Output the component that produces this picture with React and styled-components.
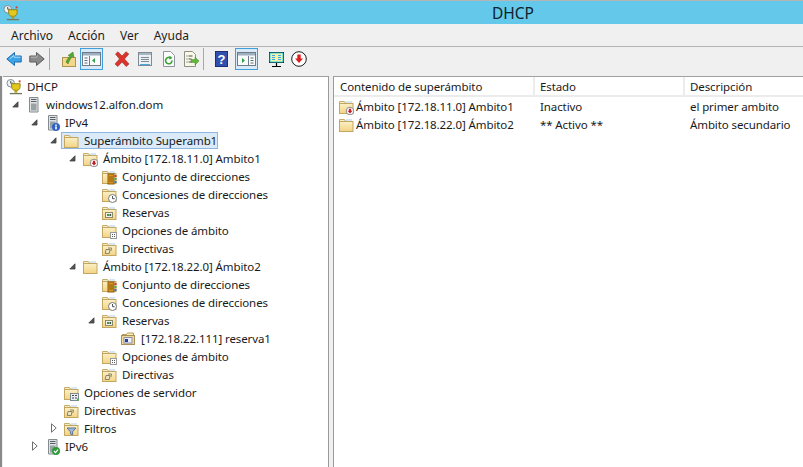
import React from 'react';
import styled, { createGlobalStyle } from 'styled-components';

const Global = createGlobalStyle`
  html, body { margin: 0; padding: 0; background: #f0f0f0; }
  #root { width: 803px; height: 467px; overflow: hidden; }
  * { box-sizing: border-box; }
  svg { flex: none; display: block; }
`;

const Window = styled.div`
  width: 803px; height: 467px; display: flex; flex-direction: column;
  font-family: "Noto Sans", "Open Sans", sans-serif; font-size: 11.5px; letter-spacing: -0.1px; color: #1a1a1a; background: #f0f0f0;
`;
const TitleBar = styled.div`
  height: 24px; flex: none; background: #63c8ea; border-top: 1px solid #b5b5b5;
  display: flex; align-items: center; padding-left: 3px;
`;
const TitleText = styled.div`
  flex: 1; text-align: center; font-size: 15.5px; letter-spacing: 0; color: #10222c; padding-left: 204px;
`;
const MenuBar = styled.div`
  height: 23px; flex: none; display: flex; align-items: center; gap: 15px; padding-left: 11px;
  border-bottom: 1px solid #b4b4b4;
`;
const MenuItem = styled.span`color: #1c1c1c; font-size: 12px; letter-spacing: 0;`;
const ToolBar = styled.div`
  height: 29px; flex: none; display: flex; align-items: center; padding: 0 0 5px 6px;
`;
const ToolIcon = styled.div`
  flex: none; width: ${p => p.$w || 16}px; height: 16px; margin-left: ${p => p.$ml || 0}px; display: flex;
`;
const ToggleButton = styled.div`
  flex: none; width: 23px; height: 22px; margin-left: ${p => p.$ml || 0}px; border: 1px solid #3f9fdc; background: #d8eaf8;
  display: flex; align-items: center; justify-content: center;
`;
const ToolSep = styled.div`
  flex: none; width: 1px; height: 22px; background: #a8a8a8; margin-left: ${p => p.$ml}px;
`;
const Panes = styled.div`
  flex: 1; display: flex; min-height: 0; padding-left: 1px; border-left: 2px solid #8a8a8a;
`;
const TreePane = styled.div`
  width: 326px; flex: none; background: #fff; border-top: 1px solid #a0a0a0; border-right: 1px solid #9a9a9a;
`;
const ListPane = styled.div`
  flex: 1; margin-left: 4px; background: #fff; border-top: 1px solid #a0a0a0; border-left: 1px solid #9a9a9a;
`;
const TreeRow = styled.div`
  height: 18px; display: flex; align-items: center; padding-left: ${p => p.$level === 0 ? 2 : 2 + (p.$level - 1) * 19}px;
`;
const ArrowCell = styled.div`
  width: 19px; flex: none; height: 18px; display: flex; align-items: center; padding-left: ${p => p.$closed ? 8 : 7}px;
`;
const Label = styled.div`
  display: flex; align-items: center; gap: 5px; height: 17px; white-space: nowrap; flex: none; margin-top: 1px;
  border: 1px solid ${p => p.$selected ? '#8fb6dc' : 'transparent'};
  background: ${p => p.$selected ? '#dbeaf9' : 'transparent'};
  margin-left: ${p => p.$selected ? '-1px' : '0'};
  padding-left: ${p => p.$selected ? '1px' : '0'};
  width: ${p => p.$selected ? '157px' : 'auto'};
`;
const HeaderRow = styled.div`
  display: grid; grid-template-columns: 201px 150px 1fr; height: 20px; border-bottom: 2px solid #ececec;
`;
const HeaderCell = styled.div`
  padding-left: ${p => p.$first ? 6 : 5}px; padding-top: 1px; border-right: ${p => p.$last ? 0 : '2px solid #ececec'}; line-height: 18px;
  white-space: nowrap; overflow: hidden;
`;
const ListRow = styled.div`
  display: grid; grid-template-columns: 201px 150px 1fr; height: 18px; align-items: center; padding-top: 1px;
`;
const ListCell = styled.div`
  padding-left: ${p => p.$icon ? 4 : 5}px; display: flex; align-items: center; gap: 2px; white-space: nowrap;
`;

const Ico = ({ children, w = 16, h = 16 }) => (
  <svg width={w} height={h} viewBox={`0 0 ${w} ${h}`}>{children}</svg>
);

const FolderBase = () => (
  <>
    <defs>
      <linearGradient id="fld" x1="0" y1="0" x2="0" y2="1">
        <stop offset="0" stopColor="#fbf0c6" />
        <stop offset="1" stopColor="#f3d382" />
      </linearGradient>
    </defs>
    <path d="M1.500 13.500V2.500h5l1 1.500h6.500" fill="#f8edc4" stroke="#c6ad6c" />
    <rect x="8" y="2" width="6" height="2" fill="#d5e6f4" />
    <rect x="1.500" y="4.500" width="13.500" height="10" fill="url(#fld)" stroke="#c3a662" />
  </>
);
const Folder = ({ children }) => <Ico><FolderBase />{children}</Ico>;

const Arrow = ({ open }) => (
  open
    ? <svg width="7" height="7" viewBox="0 0 7 7"><path d="M6 .8V6H.8z" fill="#555" stroke="#3c3c3c" strokeWidth=".8" /></svg>
    : <svg width="6" height="10" viewBox="0 0 6 10"><path d="M.5 .8L5.200 5 .5 9.200z" fill="#fff" stroke="#6f6f6f" /></svg>
);

const Server = ({ badge }) => (
  <Ico>
    <path d="M4.500 .5h8.500v14.500H4.500z" fill="#dfe2e4" stroke="#858c90" />
    <path d="M6 2.500h5.500M6 4.500h5.500" stroke="#566066" />
    <rect x="6" y="6.500" width="5.500" height="7" fill="#9aa2a6" />
    {badge === 'blue' && <><circle cx="12" cy="12" r="4" fill="#2f62c8" /><rect x="11.200" y="9.500" width="1.600" height="1.400" fill="#fff" /><rect x="11.200" y="11.400" width="1.600" height="3" fill="#fff" /></>}
    {badge === 'green' && <><circle cx="12" cy="12" r="4" fill="#2f9b3a" /><path d="M10 12l1.500 1.600L14 10.600" stroke="#fff" fill="none" strokeWidth="1.200" /></>}
  </Ico>
);

const Trophy = () => (
  <svg width="16" height="16" viewBox="0 0 17 17">
    <circle cx="5" cy="4.500" r="4" fill="#eef2f4" stroke="#7d8a90" />
    <path d="M5 2v2.500h2.400" stroke="#3d4c55" fill="none" />
    <path d="M6 5h9v3c0 3-2 4-3.500 4h-2C8 12 6 11 6 8z" fill="#e3c81d" stroke="#8f8010" />
    <rect x="9" y="12" width="3" height="2.500" fill="#b39f14" />
    <path d="M4 15.500h13" stroke="#6d7a60" strokeWidth="1.400" />
    <rect x="13.500" y="1.500" width="2" height="2" fill="#d83a2e" />
  </svg>
);
const StopBadge = () => (
  <><circle cx="12" cy="12" r="3.800" fill="#fff" stroke="#8b8b8b" /><path d="M10.900 9.800h2.200v2h1.500L12 14.600l-2.600-2.800h1.500z" fill="#c6202a" /></>
);
const PoolBadge = () => (
  <><rect x="7" y="5" width="6" height="10" fill="#d8951f" stroke="#8a5e11" /><path d="M8 8h4M8 10h4M8 12h4" stroke="#8a5e11" /><rect x="13.500" y="6" width="2" height="2" fill="#d6352c" /><rect x="13.500" y="9" width="2" height="2" fill="#3bb34a" /><rect x="13.500" y="12" width="2" height="2" fill="#2d72c7" /></>
);
const ClockBadge = () => (
  <><circle cx="11.500" cy="11.500" r="4" fill="#fff" stroke="#737b80" /><path d="M11.500 9v2.700h2.200" stroke="#4b5358" fill="none" /></>
);
const ReserveBadge = () => (
  <><rect x="4.500" y="7.500" width="7" height="5" fill="#f2f2f2" stroke="#8b8b6a" /><rect x="6" y="9" width="2" height="2" fill="#3a9a44" /><rect x="8.500" y="9" width="1.600" height="2" fill="#4a4a4a" /></>
);
const OptionBadge = () => (
  <><rect x="9.500" y="9.500" width="6" height="6" fill="#fff" stroke="#9a9a9a" /><path d="M11 11.500h1M13 11.500h1M11 13.500h1M13 13.500h1" stroke="#555" /></>
);
const PolicyBadge = () => (
  <><path d="M5 8.500h4l-.8 4H4.200z" fill="#efe6c4" stroke="#8b8563" /><path d="M7 7h3.500l-.6 3" fill="none" stroke="#8b8563" /></>
);
const ServerOptBadge = () => (
  <><rect x="7.500" y="8.500" width="8" height="7" fill="#e9eef0" stroke="#7c8a90" /><path d="M9 10.500h2M12 10.500h2M9 13h2M12 13h2" stroke="#445" /><rect x="14" y="13.500" width="2" height="2" fill="#45b04f" /></>
);
const FilterBadge = () => (
  <path d="M4 7h9l-3.400 3.800V14l-2.200-1v-2.200z" fill="#9fb6d6" stroke="#5e7698" />
);
const ReservaIco = () => (
  <Ico>
    <path d="M2 3.500h4.500l1-1.500h6v3" fill="#f9eebb" stroke="#b89c58" />
    <rect x="1.500" y="4.500" width="13" height="9" fill="#f0d79a" stroke="#a89058" />
    <rect x="4" y="6.500" width="8" height="5.500" fill="#eef1fb" stroke="#8a8fb0" />
    <rect x="5" y="8" width="3" height="3" fill="#2c3f9c" />
  </Ico>
);

const badges = {
  stop: <StopBadge />, pool: <PoolBadge />, clock: <ClockBadge />, res: <ReserveBadge />,
  opt: <OptionBadge />, pol: <PolicyBadge />, sopt: <ServerOptBadge />, filter: <FilterBadge />,
};

const treeData = [
  { level: 0, text: 'DHCP', icon: <Trophy /> },
  { level: 1, text: 'windows12.alfon.dom', arrow: 'open', icon: <Server /> },
  { level: 2, text: 'IPv4', arrow: 'open', icon: <Server badge="blue" /> },
  { level: 3, text: 'Superámbito Superamb1', arrow: 'open', icon: <Folder />, selected: true },
  { level: 4, text: 'Ámbito [172.18.11.0] Ambito1', arrow: 'open', icon: <Folder>{badges.stop}</Folder> },
  { level: 5, text: 'Conjunto de direcciones', icon: <Folder>{badges.pool}</Folder> },
  { level: 5, text: 'Concesiones de direcciones', icon: <Folder>{badges.clock}</Folder> },
  { level: 5, text: 'Reservas', icon: <Folder>{badges.res}</Folder> },
  { level: 5, text: 'Opciones de ámbito', icon: <Folder>{badges.opt}</Folder> },
  { level: 5, text: 'Directivas', icon: <Folder>{badges.pol}</Folder> },
  { level: 4, text: 'Ámbito [172.18.22.0] Ámbito2', arrow: 'open', icon: <Folder /> },
  { level: 5, text: 'Conjunto de direcciones', icon: <Folder>{badges.pool}</Folder> },
  { level: 5, text: 'Concesiones de direcciones', icon: <Folder>{badges.clock}</Folder> },
  { level: 5, text: 'Reservas', arrow: 'open', icon: <Folder>{badges.res}</Folder> },
  { level: 6, text: '[172.18.22.111] reserva1', icon: <ReservaIco /> },
  { level: 5, text: 'Opciones de ámbito', icon: <Folder>{badges.opt}</Folder> },
  { level: 5, text: 'Directivas', icon: <Folder>{badges.pol}</Folder> },
  { level: 3, text: 'Opciones de servidor', icon: <Folder>{badges.sopt}</Folder> },
  { level: 3, text: 'Directivas', icon: <Folder>{badges.pol}</Folder> },
  { level: 3, text: 'Filtros', arrow: 'closed', icon: <Folder>{badges.filter}</Folder> },
  { level: 2, text: 'IPv6', arrow: 'closed', icon: <Server badge="green" /> },
];

const listData = [
  { name: 'Ámbito [172.18.11.0] Ambito1', state: 'Inactivo', desc: 'el primer ambito', badge: badges.stop },
  { name: 'Ámbito [172.18.22.0] Ámbito2', state: '** Activo **', desc: 'Ámbito secundario' },
];

const BackArrow = () => (
  <Ico><path d="M.8 8L8.500 1.500v3.500H15.200v6H8.500v3.500z" fill="#3ea3e6" stroke="#1d6fae" /><path d="M3.500 8L8 4.300V6.200H14.500" fill="none" stroke="#a8dcfb" /></Ico>
);
const ForwardArrow = () => (
  <Ico><path d="M15.200 8L7.500 1.500v3.500H.8v6h6.700v3.500z" fill="#8a8a8a" stroke="#5c5c5c" /><path d="M1.500 6.200H8V4.300" fill="none" stroke="#b5b5b5" /></Ico>
);
const UpFolder = () => (
  <Ico><rect x="1.500" y="6.500" width="13" height="9" fill="#f3d78a" stroke="#ae9350" /><path d="M5 11c1-3 3-5 4-6l-2-.5 5-3.500 1 5.500-1.800-1C10 7 8 10 7 13z" fill="#53a832" stroke="#3a7c22" strokeWidth=".5" /></Ico>
);
const PaneLeft = () => (
  <svg width="19" height="16" viewBox="0 0 19 16">
    <rect x=".5" y="1.500" width="18" height="13" fill="#f8fafb" stroke="#6f7b85" />
    <rect x="1" y="2" width="17" height="2.500" fill="#9eb0bf" />
    <path d="M2.500 7h3M2.500 9.500h3M2.500 12h3" stroke="#5e6c78" />
    <path d="M7.500 5v9" stroke="#6f7b85" />
    <path d="M13 7v5l-3-2.500z" fill="#2fa24a" />
  </svg>
);
const PaneRight = () => (
  <svg width="19" height="16" viewBox="0 0 19 16">
    <rect x=".5" y="1.500" width="18" height="13" fill="#f8fafb" stroke="#6f7b85" />
    <rect x="1" y="2" width="17" height="2.500" fill="#9eb0bf" />
    <path d="M13.500 7h3M13.500 9.500h3M13.500 12h3" stroke="#5e6c78" />
    <path d="M11.500 5v9" stroke="#6f7b85" />
    <path d="M5 7v5l3-2.500z" fill="#2fa24a" />
  </svg>
);
const RedX = () => (
  <Ico><path d="M1.500 3L4 .8 8 5l4-4.200 2.800 2.200L10.500 8l4.500 5-2.800 2.500L8 11l-4.200 4.500L1 13l4.500-5z" fill="#d9352c" stroke="#a32a24" strokeWidth=".6" /></Ico>
);
const Props = () => (
  <Ico><rect x="1.500" y="1.500" width="13" height="13" fill="#eef1f3" stroke="#7f8a92" /><rect x="2" y="2" width="12" height="2" fill="#a9b7c2" /><path d="M4 6.500h8M4 8.500h8M4 10.500h8" stroke="#7f8a92" /><rect x="3" y="13" width="10" height="1" fill="#47a8df" /></Ico>
);
const Refresh = () => (
  <Ico w={14}><path d="M1.500 .5h7l4 4v11h-11z" fill="#fbfbfb" stroke="#8e9499" /><path d="M10 9.500A3.200 3.200 0 1 1 8.700 7" fill="none" stroke="#38a436" strokeWidth="1.600" /><path d="M7.500 4.800l3 2-3 2z" fill="#38a436" /></Ico>
);
const Export = () => (
  <Ico><path d="M1.500 .5h8l3 3v12h-11z" fill="#faf8e8" stroke="#8e9180" /><path d="M3.500 5h1M5.500 5h4M3.500 8h1M5.500 8h3M3.500 11h1M5.500 11h3" stroke="#4c4c4c" /><path d="M8 8.500h4V6l4 4-4 4v-2.500H8z" fill="#62b63a" stroke="#3d8d24" strokeWidth=".5" /></Ico>
);
const Help = () => (
  <svg width="13" height="16" viewBox="0 0 13 16"><rect x=".5" y=".5" width="12" height="15" fill="#3150ad" stroke="#1e2f73" /><text x="6.500" y="13" fontFamily="Liberation Sans, sans-serif" fontWeight="700" fontSize="13" fill="#fff" textAnchor="middle">?</text></svg>
);
const Monitor = () => (
  <Ico w={17} h={17}><rect x="1" y="1" width="15" height="11" fill="#000" /><rect x="2" y="2" width="13" height="9" fill="#f7f0a8" stroke="#29d3e0" /><path d="M4 4.500h3M4 6.500h3M4 8.500h3M10 4.500h3M10 6.500h3M10 8.500h3" stroke="#3da8e0" /><path d="M8.500 12v3M4 15.500h9" stroke="#000" strokeWidth="1.200" /></Ico>
);
const DownCircle = () => (
  <Ico><circle cx="8" cy="8" r="7.300" fill="#fff" stroke="#1a1a1a" /><path d="M6.300 3.500h3.400v4H12L8 12 4 7.500h2.300z" fill="#e01b1b" /></Ico>
);

export default function App() {
  return (
    <Window>
      <Global />
      <TitleBar>
        <Trophy />
        <TitleText>DHCP</TitleText>
      </TitleBar>
      <MenuBar>
        <MenuItem>Archivo</MenuItem>
        <MenuItem>Acción</MenuItem>
        <MenuItem>Ver</MenuItem>
        <MenuItem>Ayuda</MenuItem>
      </MenuBar>
      <ToolBar>
        <ToolIcon><BackArrow /></ToolIcon>
        <ToolIcon $ml={7}><ForwardArrow /></ToolIcon>
        <ToolSep $ml={4} />
        <ToolIcon $ml={11}><UpFolder /></ToolIcon>
        <ToggleButton $ml={3}><PaneLeft /></ToggleButton>
        <ToolIcon $ml={11}><RedX /></ToolIcon>
        <ToolIcon $ml={7}><Props /></ToolIcon>
        <ToolIcon $ml={9} $w={14}><Refresh /></ToolIcon>
        <ToolIcon $ml={7}><Export /></ToolIcon>
        <ToolSep $ml={4} />
        <ToolIcon $ml={11} $w={13}><Help /></ToolIcon>
        <ToggleButton $ml={7}><PaneRight /></ToggleButton>
        <ToolIcon $ml={10} $w={17}><Monitor /></ToolIcon>
        <ToolIcon $ml={6}><DownCircle /></ToolIcon>
      </ToolBar>
      <Panes>
        <TreePane>
          {treeData.map((r, i) => (
            <TreeRow key={i} $level={r.level}>
              {r.level > 0 && (
                <ArrowCell $closed={r.arrow === 'closed'}>{r.arrow && <Arrow open={r.arrow === 'open'} />}</ArrowCell>
              )}
              <Label $selected={r.selected}>{r.icon}<span>{r.text}</span></Label>
            </TreeRow>
          ))}
        </TreePane>
        <ListPane>
          <HeaderRow>
            <HeaderCell $first>Contenido de superámbito</HeaderCell>
            <HeaderCell>Estado</HeaderCell>
            <HeaderCell $last>Descripción</HeaderCell>
          </HeaderRow>
          {listData.map((r, i) => (
            <ListRow key={i}>
              <ListCell $icon><Folder>{r.badge}</Folder><span>{r.name}</span></ListCell>
              <ListCell>{r.state}</ListCell>
              <ListCell>{r.desc}</ListCell>
            </ListRow>
          ))}
        </ListPane>
      </Panes>
    </Window>
  );
}
